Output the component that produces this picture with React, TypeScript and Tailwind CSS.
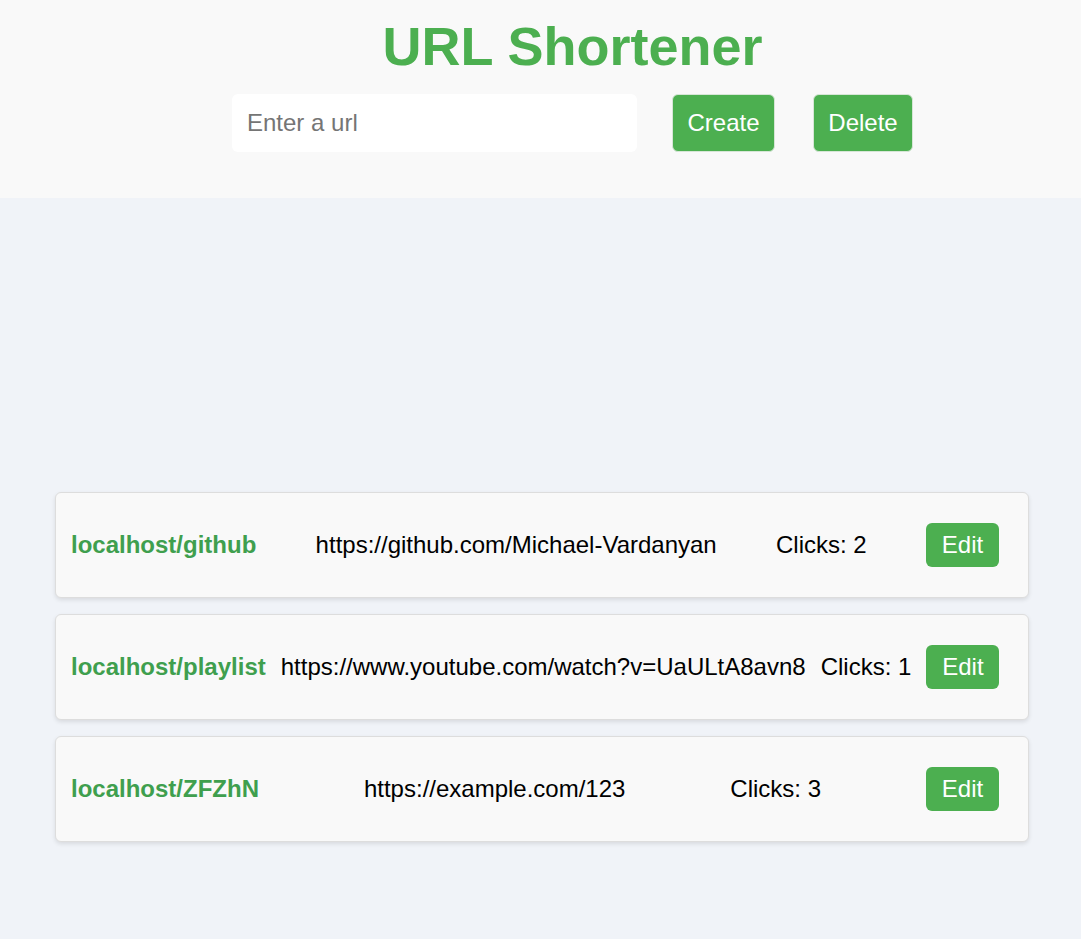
import React from "react";

const rows = [
  { short: "localhost/github", url: "https://github.com/Michael-Vardanyan", clicks: 2 },
  { short: "localhost/playlist", url: "https://www.youtube.com/watch?v=UaULtA8avn8", clicks: 1 },
  { short: "localhost/ZFZhN", url: "https://example.com/123", clicks: 3 },
];

export default function App() {
  return (
    <div
      className="min-h-[939px] bg-[#f0f3f8] text-black"
      style={{ fontFamily: '"Liberation Sans", Arial, sans-serif' }}
    >
      <header className="bg-[#f9f9f9] pt-[15px] pb-[46px] pl-[64px] flex flex-col items-center">
        <h1 className="text-[54px] leading-[62px] font-bold text-[#4caf50] m-0">URL Shortener</h1>
        <div className="mt-[17px] flex items-center">
          <input
            placeholder="Enter a url"
            className="w-[405px] h-[58px] rounded-md bg-white px-[15px] text-[24px] text-black placeholder:text-[#757575] outline-none"
          />
          <button className="ml-[35px] w-[103px] h-[58px] rounded-md border border-[#d7e6d7] bg-[#4caf50] text-white text-[24px]">
            Create
          </button>
          <button className="ml-[38px] w-[100px] h-[58px] rounded-md border border-[#d7e6d7] bg-[#4caf50] text-white text-[24px]">
            Delete
          </button>
        </div>
      </header>
      <main className="mt-[294px] ml-[55px] w-[974px] flex flex-col gap-4">
        {rows.map((r) => (
          <div
            key={r.short}
            className="h-[106px] flex items-center justify-between gap-[15px] bg-[#f9f9f9] border border-[#dddddd] rounded-md shadow-[0_2px_4px_rgba(0,0,0,0.1)] pl-[15px] pr-[29px]"
          >
            <span className="text-[24px] font-bold text-[#3f9f4e] whitespace-nowrap">{r.short}</span>
            <span className="text-[24px] whitespace-nowrap">{r.url}</span>
            <span className="text-[24px] whitespace-nowrap">Clicks: {r.clicks}</span>
            <button className="w-[73px] h-[44px] rounded-md bg-[#4caf50] text-white text-[24px] shrink-0">
              Edit
            </button>
          </div>
        ))}
      </main>
    </div>
  );
}
